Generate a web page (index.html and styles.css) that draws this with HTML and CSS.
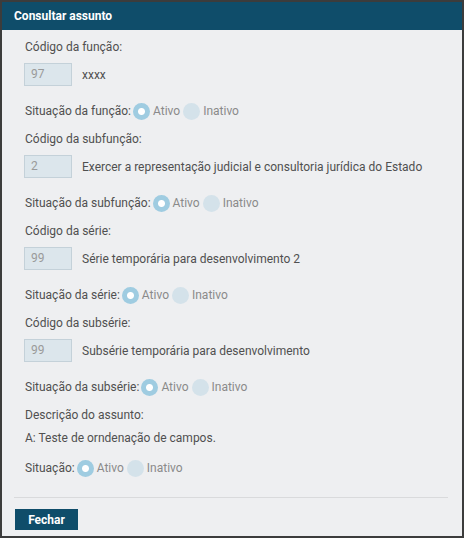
FILE: index.html
```html
<!DOCTYPE html>
<html lang="pt">
<head>
<meta charset="utf-8">
<title>Consultar assunto</title>
<link rel="stylesheet" href="styles.css">
</head>
<body>
<div class="window">
  <div class="header">Consultar assunto</div>
  <div class="content">
    <div class="form">
      <div class="group">
        <div class="label">Código da função:</div>
        <div class="field-row"><span class="code">97</span><span class="desc">xxxx</span></div>
        <div class="radio-row"><span class="rlabel">Situação da função:</span><span class="radio on"></span><span class="opt">Ativo</span><span class="radio"></span><span class="opt">Inativo</span></div>
      </div>
      <div class="group">
        <div class="label">Código da subfunção:</div>
        <div class="field-row"><span class="code">2</span><span class="desc">Exercer a representação judicial e consultoria jurídica do Estado</span></div>
        <div class="radio-row"><span class="rlabel">Situação da subfunção:</span><span class="radio on"></span><span class="opt">Ativo</span><span class="radio"></span><span class="opt">Inativo</span></div>
      </div>
      <div class="group">
        <div class="label">Código da série:</div>
        <div class="field-row"><span class="code">99</span><span class="desc">Série temporária para desenvolvimento 2</span></div>
        <div class="radio-row"><span class="rlabel">Situação da série:</span><span class="radio on"></span><span class="opt">Ativo</span><span class="radio"></span><span class="opt">Inativo</span></div>
      </div>
      <div class="group">
        <div class="label">Código da subsérie:</div>
        <div class="field-row"><span class="code">99</span><span class="desc">Subsérie temporária para desenvolvimento</span></div>
        <div class="radio-row"><span class="rlabel">Situação da subsérie:</span><span class="radio on"></span><span class="opt">Ativo</span><span class="radio"></span><span class="opt">Inativo</span></div>
      </div>
      <div class="label">Descrição do assunto:</div>
      <div class="text">A: Teste de orndenação de campos.</div>
      <div class="radio-row last"><span class="rlabel">Situação:</span><span class="radio on"></span><span class="opt">Ativo</span><span class="radio"></span><span class="opt">Inativo</span></div>
    </div>
    <div class="footer">
      <button class="btn" type="button">Fechar</button>
    </div>
  </div>
</div>
</body>
</html>
```
FILE: styles.css
```css
html, body {
  margin: 0;
  padding: 0;
}
body {
  width: 464px;
  height: 538px;
  font-family: Roboto, "Liberation Sans", sans-serif;
  font-size: 12px;
  color: #505050;
}
.window {
  box-sizing: border-box;
  width: 464px;
  height: 538px;
  border: 2px solid #3c3c3c;
  background: #eeeff1;
  display: flex;
  flex-direction: column;
}
.header {
  height: 28px;
  line-height: 28px;
  background: #0f4d6a;
  color: #fff;
  font-weight: bold;
  font-size: 12px;
  padding-left: 12px;
  font-family: Roboto, "Liberation Sans", sans-serif;
}
.content {
  padding: 7px 12px 0 12px;
}
.form {
  padding-left: 11px;
}
.label, .text {
  height: 20px;
  line-height: 20px;
}
.label {
  margin-bottom: 3px;
}
.group .label {
  margin-bottom: 6px;
}
.text {
  margin-bottom: 10px;
}
.field-row {
  display: flex;
  align-items: center;
  height: 23px;
  margin-bottom: 15px;
}
.code {
  box-sizing: border-box;
  width: 48px;
  height: 23px;
  line-height: 21px;
  border: 1px solid #c4d1d9;
  background: #dce6ec;
  color: #9a9a9a;
  padding-left: 6px;
  margin-left: -1px;
}
.desc {
  margin-left: 10px;
}
.radio-row {
  display: flex;
  align-items: center;
  height: 20px;
  margin-bottom: 8px;
}
.radio-row.last {
  margin-bottom: 19px;
}
.rlabel {
  margin-right: 2px;
}
.radio {
  box-sizing: border-box;
  width: 17px;
  height: 17px;
  border-radius: 50%;
  background: #d4e2ea;
  display: inline-block;
  flex: none;
}
.radio.on {
  background: #9fcce1 radial-gradient(circle, #fff 0 3px, rgba(255,255,255,0) 4px);
}
.opt {
  color: #8a8a8a;
  margin-left: 3px;
  margin-right: 3px;
}
.footer {
  border-top: 1px solid #d9dadc;
  padding-top: 11px;
  margin-right: 2px;
}
.btn {
  width: 63px;
  height: 21px;
  margin-left: 1px;
  padding: 0;
  border: none;
  background: #0f4d6a;
  color: #fff;
  font-family: Roboto, "Liberation Sans", sans-serif;
  font-weight: bold;
  font-size: 12px;
}
```
